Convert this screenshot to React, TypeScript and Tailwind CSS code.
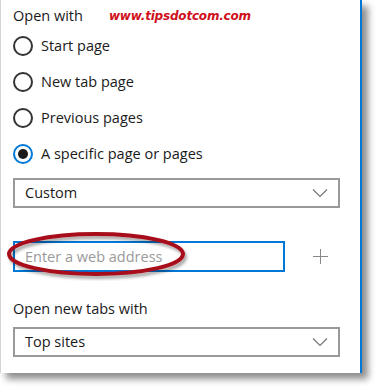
import React from 'react';

const Radio = ({ label, checked }: { label: string; checked?: boolean }) => (
  <div className="flex items-center h-[36px]">
    <span
      className={
        checked
          ? 'w-[20px] h-[20px] rounded-full border-2 border-[#0078d7] flex items-center justify-center'
          : 'w-[20px] h-[20px] rounded-full border-2 border-[#333]'
      }
    >
      {checked && <span className="w-[10px] h-[10px] rounded-full bg-[#1a1a1a]" />}
    </span>
    <span className="ml-[8px] text-[14.5px] text-[#1a1a1a]">{label}</span>
  </div>
);

const Chevron = () => (
  <svg width="16" height="10" viewBox="0 0 16 10" fill="none">
    <path d="M1 1.5 L8 8.5 L15 1.5" stroke="#777" strokeWidth="1.2" />
  </svg>
);

const Select = ({ value }: { value: string }) => (
  <div className="w-[327px] h-[30px] border-2 border-[#999] flex items-center justify-between pl-[10px] pr-[10px] bg-white">
    <span className="text-[14.5px] text-[#1a1a1a]">{value}</span>
    <Chevron />
  </div>
);

export default function App() {
  return (
    <div className="w-[376px] h-[389px] bg-white overflow-hidden" style={{ fontFamily: '"Open Sans", "Noto Sans", sans-serif' }}>
      <div className="relative w-[362px] h-[373px] bg-white border-l border-[#d4d4d4] border-r-2 border-r-[#0078d7] shadow-[6px_6px_7px_rgba(0,0,0,0.45)] pl-[12px] pt-[4px]">
        {/* header */}
        <div className="flex items-center h-[24px]">
          <span className="text-[14.5px] text-[#1a1a1a]">Open with</span>
          <span
            className="ml-[26px] text-[12px] font-bold italic text-[#d0101c] tracking-[-0.2px]"
            style={{ fontFamily: '"DejaVu Sans", sans-serif' }}
          >
            www.tipsdotcom.com
          </span>
        </div>

        <div className="flex flex-col">
          <Radio label="Start page" />
          <Radio label="New tab page" />
          <Radio label="Previous pages" />
          <Radio label="A specific page or pages" checked />
        </div>

        <div className="mt-[6px]">
          <Select value="Custom" />
        </div>

        <div className="mt-[33px] flex items-center">
          <div className="w-[272px] h-[31px] border-2 border-[#0078d7] flex items-center pl-[10px]">
            <span className="text-[14.5px] text-[#9a9a9a]">Enter a web address</span>
          </div>
          <svg className="ml-[28px]" width="15" height="15" viewBox="0 0 15 15">
            <path d="M7.5 0 V15 M0 7.5 H15" stroke="#888" strokeWidth="1" />
          </svg>
        </div>

        <div className="mt-[27px] text-[14.5px] text-[#1a1a1a] leading-[20px]">Open new tabs with</div>

        <div className="mt-[8px]">
          <Select value="Top sites" />
        </div>

        {/* red highlight ellipse */}
        <svg className="absolute left-[5px] top-[231px]" width="184" height="50" viewBox="0 0 184 50">
          <defs>
            <filter id="sh" x="-10%" y="-20%" width="130%" height="160%">
              <feDropShadow dx="2" dy="3" stdDeviation="1.5" floodColor="#000" floodOpacity="0.35" />
            </filter>
          </defs>
          <ellipse cx="90" cy="23" rx="87" ry="20" fill="none" stroke="#a8101a" strokeWidth="4" filter="url(#sh)" />
        </svg>
      </div>
    </div>
  );
}
